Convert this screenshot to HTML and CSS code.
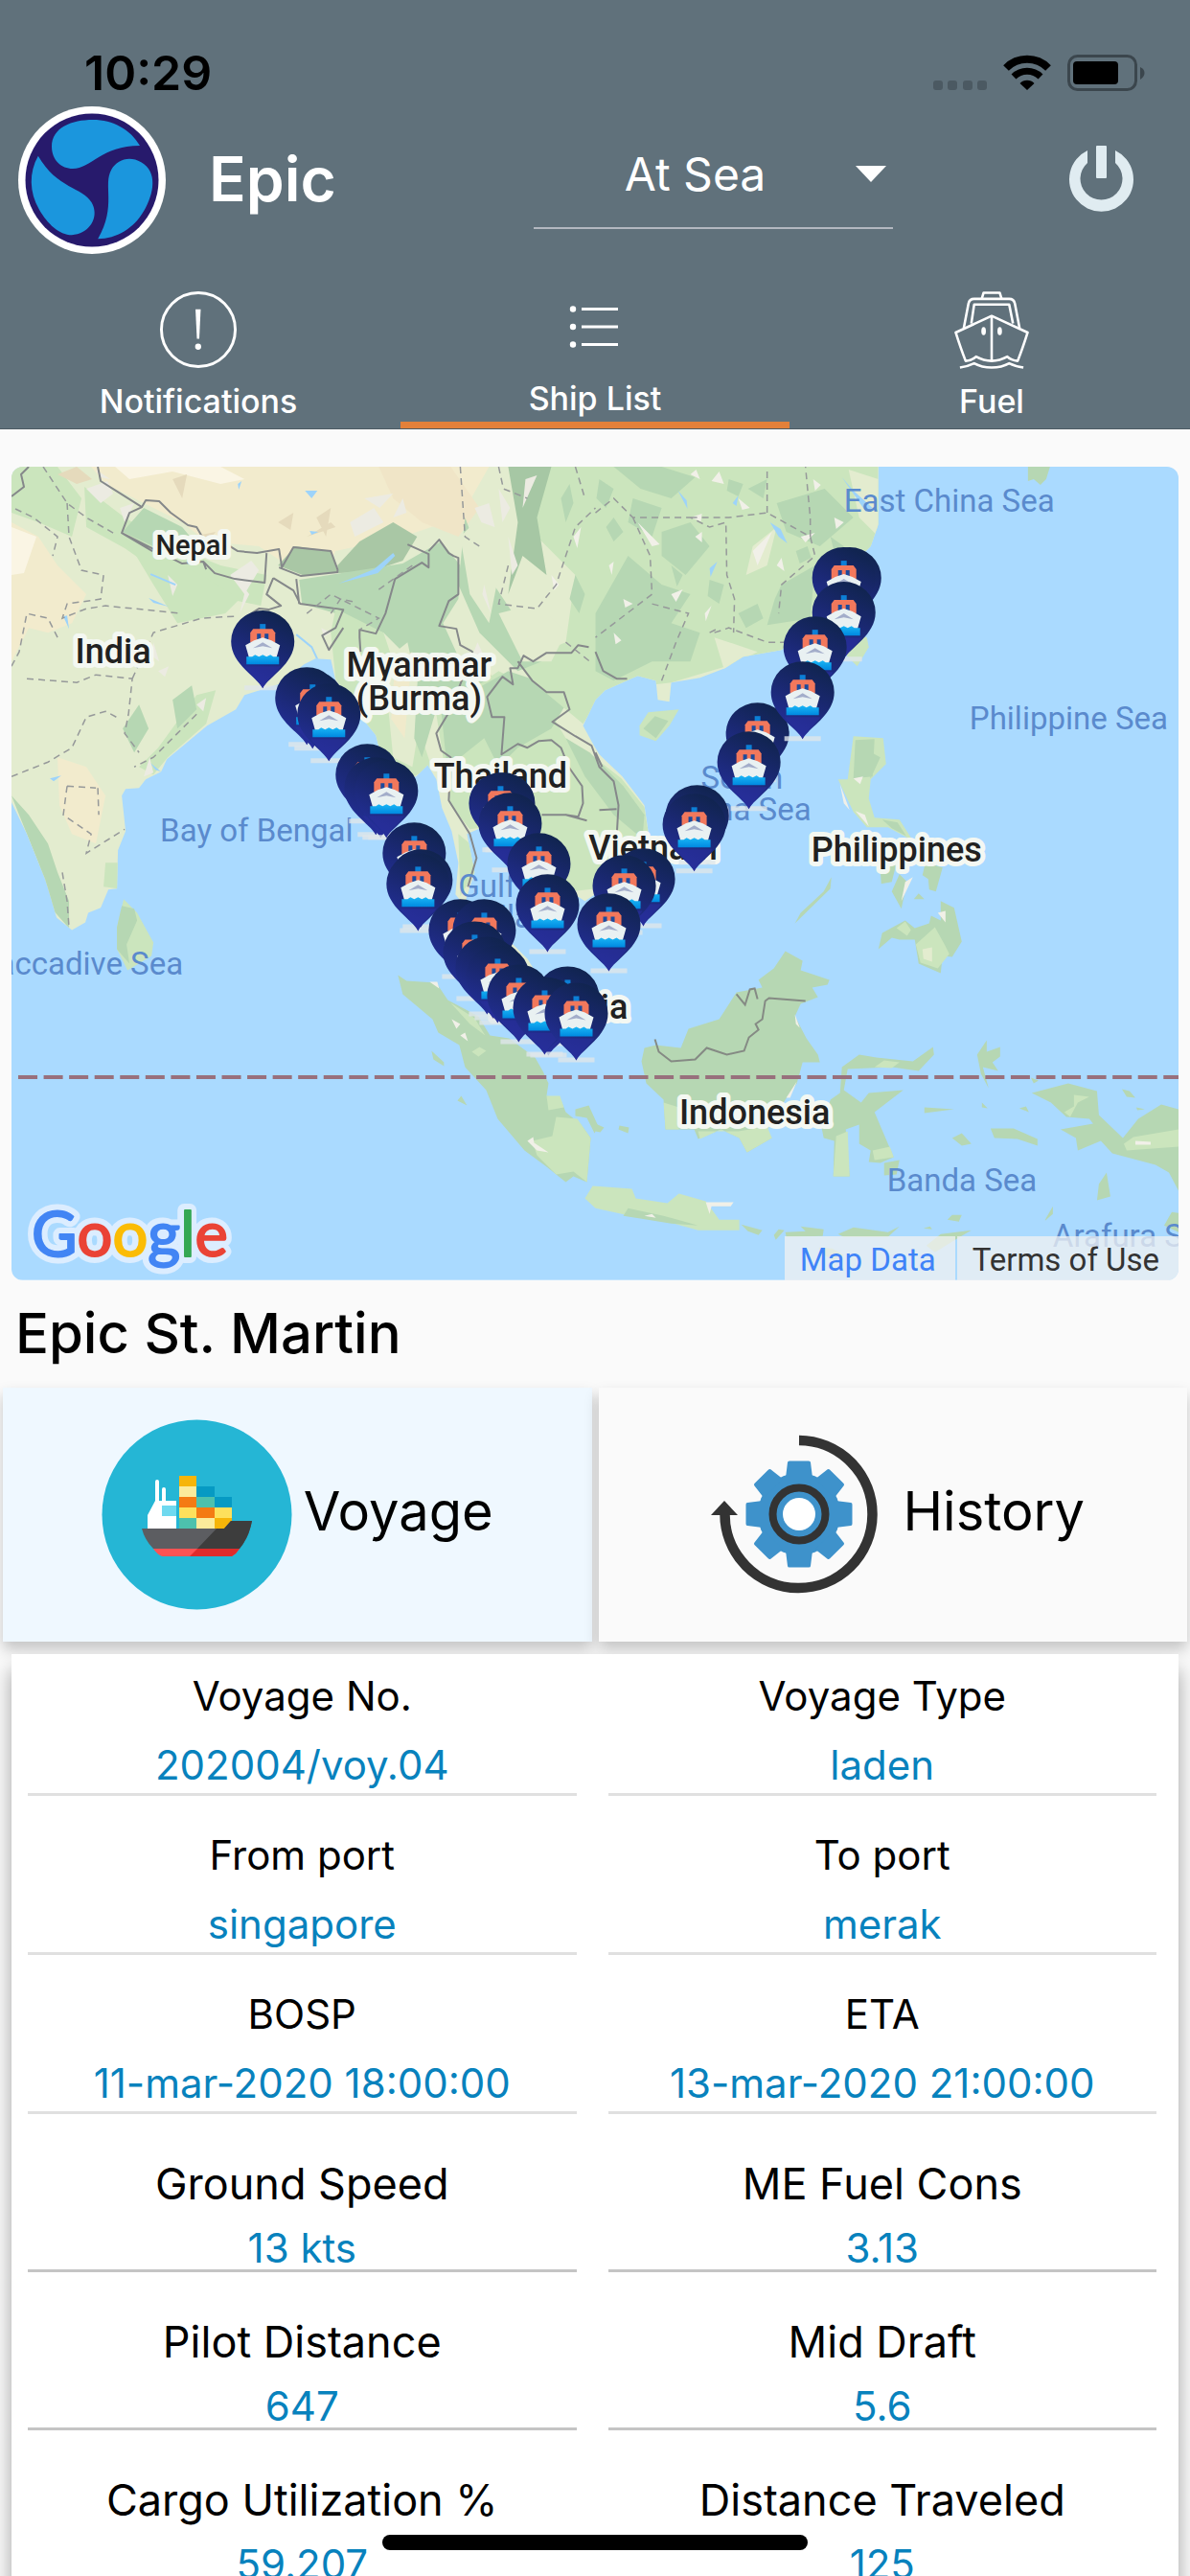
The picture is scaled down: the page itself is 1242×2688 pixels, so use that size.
FILE: index.html
```html
<!DOCTYPE html>
<html lang="en">
<head>
    <meta charset="UTF-8">
    <meta name="viewport" content="width=device-width, initial-scale=1.0">
    <title>Epic - Ship List</title>
    <link rel="stylesheet" href="styles.css">
</head>
<body>
    <header class="header">
        <div class="status-bar">
            <span class="time">10:29</span>
            <svg class="status-icons" viewBox="970 54 226 44" aria-hidden="true">
                <g fill="#4b5962">
                    <rect x="974" y="84" width="10" height="10" rx="3"/>
                    <rect x="989" y="84" width="10" height="10" rx="3"/>
                    <rect x="1005" y="84" width="10" height="10" rx="3"/>
                    <rect x="1020" y="84" width="10" height="10" rx="3"/>
                </g>
                <path d="M1050 71A31 31 0 0 1 1094 71" fill="none" stroke="#000" stroke-width="8"/>
                <path d="M1058 80A20 20 0 0 1 1086 80" fill="none" stroke="#000" stroke-width="7"/>
                <path d="M1064.500 87A10.500 10.500 0 0 1 1079.500 87L1072 94Z"/>
                <rect x="1115.500" y="58.500" width="70" height="35" rx="9" fill="none" stroke="#3b464d" stroke-width="3"/>
                <rect x="1120" y="64" width="47" height="24" rx="4"/>
                <path d="M1190 70Q1194.500 72 1194.500 76T1190 83Z" fill="#3b464d"/>
            </svg>
        </div>

        <div class="top-bar">
            <div class="brand">
                <svg class="logo" viewBox="18 110 156 156" aria-hidden="true">
                    <circle cx="96" cy="188" r="77" fill="#fff"/>
                    <circle cx="96" cy="188" r="69.500" fill="#271a6c"/>
                    <g fill="#1b96dd">
                        <path id="blade" d="M146 152C136 135 118 125 97 125C75 125 54 133 54 153C54 167 64 176 76 176C95 176 106 152 146 152Z"/>
                        <use href="#blade" transform="rotate(120 96 188)"/>
                        <use href="#blade" transform="rotate(240 96 188)"/>
                    </g>
                </svg>
                <h1>Epic</h1>
            </div>
            <div class="picker">
                <select aria-label="Ship status">
                    <option>At Sea</option>
                    <option>In Port</option>
                </select>
            </div>
            <button class="power" aria-label="Log out">
                <svg viewBox="1115 151 70 70" aria-hidden="true">
                    <path d="M1135 157V170A22 22 0 1 0 1164 170V157A33.500 33.500 0 1 1 1135 157Z" fill="#e0ecf1"/>
                    <rect x="1144" y="152" width="11" height="34" rx="1" fill="#e0ecf1"/>
                </svg>
            </button>
        </div>

        <nav class="tabs">
            <button class="tab">
                <svg viewBox="167 302 83 83" aria-hidden="true">
                    <circle cx="208.500" cy="343.500" r="39" fill="none" stroke="#fff" stroke-width="3"/>
                    <path d="M205.500 322H211L209.500 353H207Z" fill="#fff"/>
                    <circle cx="208.300" cy="361.500" r="3.200" fill="#fff"/>
                </svg>
                Notifications
            </button>
            <button class="tab active">
                <svg viewBox="580 299 82 82" aria-hidden="true">
                    <g fill="#fff">
                        <circle cx="598" cy="321.500" r="3.200"/>
                        <circle cx="598" cy="340" r="3.200"/>
                        <circle cx="598" cy="358.500" r="3.200"/>
                        <rect x="607" y="320" width="38" height="3"/>
                        <rect x="607" y="338.500" width="38" height="3"/>
                        <rect x="607" y="357" width="38" height="3"/>
                    </g>
                </svg>
                Ship List
            </button>
            <button class="tab">
                <svg viewBox="991 302 83 83" aria-hidden="true">
                    <g fill="none" stroke="#fff" stroke-width="2.600" stroke-linejoin="round">
                        <path d="M1022 311L1024 304.500H1041L1043 311"/>
                        <path d="M1003 342L1008 316Q1009 311 1014 311H1051Q1056 311 1057 316L1062 342"/>
                        <path d="M1011 337L1014 317H1051L1055 337"/>
                        <path d="M1032.500 329L994.500 346.500Q1000 364 1005 376.500Q1012 376 1016 372Q1024 376.500 1032.500 376.500T1049 372Q1053 376 1060 376.500Q1065 364 1070.500 346.500Z"/>
                        <path d="M1032.500 329V376"/>
                        <path d="M999 383.500Q1008 382 1014 379Q1022 383.500 1032.500 383.500T1051 379Q1057 382 1066 383.500"/>
                    </g>
                    <ellipse cx="1024" cy="345" rx="2.400" ry="4.400" fill="#fff"/>
                    <ellipse cx="1041" cy="345" rx="2.400" ry="4.400" fill="#fff"/>
                </svg>
                Fuel
            </button>
        </nav>
    </header>

    <main>
        <section class="map" aria-label="Ship track map">
            <svg viewBox="12 487 1217 848">
                <defs>
                    <linearGradient id="pinFill" x1="0.700" y1="0" x2="0.300" y2="1">
                        <stop offset="0" stop-color="#10244d"/>
                        <stop offset="0.450" stop-color="#1a2871"/>
                        <stop offset="1" stop-color="#2530a0"/>
                    </linearGradient>
                    <linearGradient id="water" x1="0" y1="0" x2="0" y2="1">
                        <stop offset="0" stop-color="#19b5f5"/>
                        <stop offset="1" stop-color="#0089e0"/>
                    </linearGradient>
                    <g id="pin">
                        <path d="M-19 78H19V83H-19Z" fill="#dfe6ea" opacity="0.800"/>
                        <path d="M0 81C-6 69 -33 56 -33 32A33 32 0 0 1 33 32C33 56 6 69 0 81Z" fill="url(#pinFill)"/>
                        <path d="M0 81C-4 72 -14 65 -19 58H19C14 65 4 72 0 81Z" fill="#2a2f9c" opacity="0.600"/>
                        <path d="M-3 14H3V20H-3Z" fill="#0c7fd6"/>
                        <path d="M-10 19H10L13 23V33H-13V23Z" fill="#f2785c"/>
                        <path d="M-6 24H-2V30H-6ZM2 24H6V30H2Z" fill="#1b4a9c"/>
                        <path d="M-18 36L-9 31L0 28L9 31L18 36L14 50H-14Z" fill="#e9f1f2"/>
                        <path d="M-10 39L0 33L10 39L0 37Z" fill="#a3adca"/>
                        <path d="M-17 48H-11L-8 46L-4 48L0 46L4 48L8 46L11 48H17V56H-17Z" fill="url(#water)"/>
                    </g>
                    <clipPath id="land">
                        <path id="mainland" d="M12 487V837L28 870L47 917L51 930L59 957L75 970L89 962L92 952L105 947L113 928L122 927L123 887L131 867L127 830L131 823L145 822L152 813L168 805L174 792L216 757L246 740L255 725L293 713L317 693L329 687L345 688L350 710L376 747L392 767L396 783L412 800L424 813L434 810L446 798L455 813L461 843L471 867L478 900L475 933L500 965L515 1010L540 1050L570 1080L590 1078L575 1040L550 1000L520 970L500 950L486 938L495 910L487 870L503 863L530 870L545 900L570 915L594 930L610 940L640 920L662 895L676 867L672 840L649 810L625 787L619 777L608 757L621 730L631 720L665 705L684 710L686 730L698 732L700 712L730 707L756 697L775 685L815 678L859 647L898 580L908 570L916 547V487Z"/>
                    </clipPath>
                </defs>

                <rect x="12" y="487" width="1217" height="848" fill="#aadaff"/>

                <!-- mainland -->
                <use href="#mainland" fill="#e3eccf"/>
                <g clip-path="url(#land)">
                    <path d="M95 487H510L480 540L420 560L350 575L342 592L300 590L270 570L215 565L190 545L160 530L140 520L110 505Z" fill="#f2ebcd"/>
                    <path d="M12 545L40 560L60 590L90 620L75 650L50 660L30 655L12 690Z" fill="#f2ebcd"/>
                    <path d="M12 550L38 560L25 598L12 600Z" fill="#faf5e4"/>
                    <path d="M120 487H230L255 500L230 505L180 492L135 500Z" fill="#faf5e4"/>
                    <path d="M60 790L90 800L110 830L100 880L75 870L62 840Z" fill="#f2ebcd"/>
                    <path d="M395 487H470L500 530L478 560L440 545L410 520Z" fill="#f0e5c7"/>
                    <path d="M12 487H60L85 520L75 560L40 545L12 535Z" fill="#cbe5bd"/>
                    <path d="M88 508L130 540L180 570L230 590L278 600L272 632L215 620L170 600L130 572L90 550Z" fill="#cbe5bd"/>
                    <path d="M130 560L210 600L250 625L235 640L185 650L160 610Z" fill="#cbe5bd"/>
                    <path d="M128 555L150 530L190 550L215 580L190 575L160 570Z" fill="#b6d7b3"/>
                    <path d="M290 590L308 570L345 575L352 597L318 601Z" fill="#a9c7a5"/>
                    <path d="M352 590L375 565L410 545L435 560L420 585L385 597L352 598Z" fill="#a9c7a5"/>
                    <path d="M312 605L420 588L460 565L480 590L478 625L462 650L478 685L510 700L540 760L470 760L430 690L400 660L350 640L315 630Z" fill="#b6d7b3"/>
                    <path d="M350 635L400 660L420 720L440 770L450 800L428 812L396 780L350 708L345 660Z" fill="#cbe5bd"/>
                    <path d="M400 690L425 670L440 740L430 800L410 790Z" fill="#e3eccf"/>
                    <path d="M436 700L448 695L455 740L440 790L432 770Z" fill="#b6d7b3"/>
                    <path d="M412 690L430 680L422 770L408 750Z" fill="#f0eacb"/>
                    <path d="M455 745L520 700L560 720L590 770L620 790L648 812L672 842L676 867L640 925L595 930L560 905L530 860L490 865L470 840Z" fill="#cbe5bd"/>
                    <path d="M460 740L530 700L560 710L590 735L575 760L540 780L520 800L505 770L480 790L468 820Z" fill="#b6d7b3"/>
                    <path d="M590 770L615 785L650 820L672 850L670 875L640 850L610 810Z" fill="#b6d7b3"/>
                    <path d="M540 487H916V570L859 647L815 678L700 712L631 720L608 755L560 715L540 690L590 670L600 600L560 560Z" fill="#cbe5bd"/>
                    <path d="M530 487H575L560 540L570 600L545 580L530 620L540 545Z" fill="#a6c7a4"/>
                    <path d="M485 540L500 580L515 610L535 640L565 690L540 700L500 660L478 610Z" fill="#b6d7b3"/>
                    <path d="M520 640L560 630L590 660L575 690L545 690Z" fill="#e3eccf"/>
                    <path d="M480 560L500 540L520 600L510 650L490 620Z" fill="#e3eccf"/>
                    <path d="M640 487H690L725 498L700 520L668 510Z" fill="#b6d7b3"/>
                    <path d="M690 555L720 545L740 570L715 600L690 580Z" fill="#b6d7b3"/>
                    <path d="M810 525L860 510L890 540L855 570L820 555Z" fill="#b6d7b3"/>
                    <path d="M815 610L850 590L845 645L800 652L808 625Z" fill="#b6d7b3"/>
                    <path d="M655 580L690 610L720 620L700 650L730 660L720 690L680 690L640 710L621 700V640Z" fill="#b6d7b3"/>
                    <path d="M660 520L690 530L680 560L655 545Z" fill="#b6d7b3"/>
                    <path d="M745 665L790 680L755 698Z" fill="#e3eccf"/>
                    <path d="M785 570L810 550L800 590L778 600Z" fill="#e3eccf"/>
                    <path d="M885 490L916 500V560L896 540Z" fill="#e3eccf"/>
                    <path d="M12 830L30 850L50 880L60 910L72 940L72 968L56 950L40 900Z" fill="#b6d7b3"/>
                    <path d="M128 760L145 735L155 760L140 785Z" fill="#b6d7b3"/>
                    <path d="M145 800L165 780L205 725L225 720L215 755L175 790L160 808Z" fill="#cbe5bd"/>
                    <path d="M180 730L200 715L205 740L185 760Z" fill="#b6d7b3"/>
                    <path d="M110 900H123V927L108 925Z" fill="#cbe5bd"/>
                    <path d="M478 870L490 880L495 910L480 935Z" fill="#cbe5bd"/>

                    <!-- light flecks on the hills -->
                    <path d="M90 510L112 502L118 515L105 525ZM125 530L140 525L130 545ZM100 490L115 500L104 498ZM240 600L262 585L270 595L255 620ZM365 545L390 530L400 545L370 560ZM380 520L410 515L396 530ZM495 530L510 525L516 550L502 545ZM520 510L532 530L524 545ZM548 500L560 496L545 530ZM505 610L512 640L503 620ZM530 560L540 590L534 600ZM498 670L505 685L490 690ZM175 600L185 610L180 622ZM260 620L250 640L256 615ZM165 700L176 695L172 706ZM150 810L156 790L160 806ZM205 735L215 728L212 742ZM160 670L166 690L158 684ZM335 655L345 660L338 664ZM410 540L420 520L424 535Z" fill="#ecebe2"/>
                    <path d="M742 502L750 492L755 505ZM665 545L688 568L680 570ZM725 560L732 555V566ZM785 575L805 555L790 590ZM720 495L726 490L730 500ZM770 520L782 530L774 532ZM810 590L815 582L818 596ZM735 640L742 632L736 648ZM640 660L648 668L642 672ZM700 620L712 615L705 628ZM848 500L856 506L850 512ZM870 540L880 545L872 552ZM635 590L640 586L638 600ZM650 625L660 630L652 634ZM720 540L732 536L731 544ZM835 560L850 556L840 566ZM598 560L606 550L602 572ZM575 600L583 610L578 616Z" fill="#f1f0e8"/>
                    <path d="M625 500L640 510L632 530L622 520ZM700 590L712 600L706 612ZM760 500L775 505L770 518L758 512ZM740 605L755 610L750 630L738 622ZM770 640L790 630L796 645L778 655ZM830 575L842 570L846 582L834 588ZM866 560L880 570L872 584ZM780 510L800 500L796 520ZM640 540L650 555L640 565L632 550ZM600 600L610 620L604 640L594 625ZM585 520L594 505L598 525L590 545Z" fill="#b6d7b3"/>
                    <path d="M290 545L306 535L303 553ZM330 540L345 530L340 560ZM320 560L345 545L350 550ZM180 500L195 495L190 520ZM60 495L80 487L96 500L80 505ZM200 560L225 555L212 570Z" fill="#e5dabc"/>

                    <!-- lakes and rivers -->
                    <path d="M248 505L252 502L249 511ZM318 512L331 512L325 520ZM323 554L332 555L325 558ZM155 624L176 633L160 629ZM353 609L390 594L410 577L412 580L394 598ZM160 600L185 608ZM66 643L72 656L70 642ZM52 812L64 809L56 815ZM707 512L716 522L717 531ZM803 545L814 552L821 567L812 560ZM740 593L748 586L741 602ZM764 525L770 517L768 528ZM157 796L168 805L162 803ZM878 498L890 512L910 530L903 534Z" fill="#9dd3fa"/>
                    <path d="M309 662L325 675L333 692M157 599L183 610" fill="none" stroke="#9dd3fa" stroke-width="2"/>
                </g>

                <!-- country borders -->
                <g fill="none" stroke="#85888a" stroke-width="2" stroke-linejoin="round">
                    <path d="M12 518L25 508L22 495L30 487M102 487L105 502L148 529L152 522L166 523L178 535L196 548L205 550L212 562L240 570L248 575L268 577L291 573L294 592L306 571L345 575L352 594V597L314 601L291 592M148 529L135 535L127 556L159 575M212 586L224 598L245 604L276 608L278 577M127 556L190 588L212 586L215 594"/>
                    <path d="M285 603L306 616L313 630L358 636L350 655L336 663L343 678L358 655M285 603L278 620L293 632L280 636L270 635L262 640M309 604L312 630M375 665V657L392 661L402 640L412 604L440 587L447 592V578L425 568M447 575L458 563L468 577L473 580L478 582V620L468 627L458 653L476 656L480 673L493 680M375 665L376 680"/>
                    <path d="M614 675L603 673L596 681H570L556 690L546 684L540 697H532L535 714L524 706L508 727L513 748L526 748L523 787L540 776L550 780L562 773L575 772L585 780L593 800L607 820L608 838L603 852L590 850H565M493 680L470 740L455 765L460 783L470 790L468 835L490 870L497 895L488 925M540 690L555 710L570 722H588L594 740L576 753L600 768L617 778L625 800L640 815L645 840L643 875M625 845L643 844M590 850L612 856M621 680L629 700L643 708H654M621 785L628 800"/>
                </g>

                <!-- state borders -->
                <g fill="none" stroke="#96999a" stroke-width="1.500" stroke-dasharray="7 5">
                    <path d="M45 487L70 525L90 540L118 556M70 525L72 560L85 595L108 600L105 625L70 630L65 645L90 635L110 632L190 640M16 531L35 540L60 560L55 580M12 695L20 680L28 640L50 645L60 665M28 708L80 712L100 704L138 708L134 745L130 765L145 785M138 708L160 660L210 645L245 643M12 810L50 795L75 780L90 748L110 742L125 750M70 820L66 850L95 870L90 890L130 865M70 820L100 822M102 822L103 850M205 745L160 790L140 800"/>
                    <path d="M320 640L345 620L395 645L375 657M395 615L430 590M345 640L355 625L370 628M480 487L485 560L500 570M530 590L520 630L560 635L580 610L590 580L600 550L621 530M621 535L640 520L660 540L720 540L740 550L757 545L758 600L766 625L765 660M660 540L678 580L680 620L621 665M720 540L760 540L800 535L845 560L850 580L815 610L812 640M800 535V487M745 660L760 655L800 670L820 670M845 560V540L840 487M680 630L718 640L705 670L690 710M590 670L615 690M740 660L750 655"/>
                    <path d="M65 910L70 940L72 968M520 487L525 510L550 520M600 487L610 520"/>
                </g>

                <!-- islands -->
                <g fill="#b6d7b3">
                    <path d="M129 938L143 952L160 983L158 997L133 1012L122 990V967Z" fill="#cbe5bd"/>
                    <path d="M127 945L140 948L143 960L132 985L135 1005L122 990V967Z"/>
                    <path d="M415 1017L424 1023L455 1025L467 1043L499 1060L511 1080L531 1083L558 1103L566 1117L572 1130L570 1143L584 1145L590 1160L606 1173L616 1187L612 1233L598 1227L590 1233L570 1217L547 1200L519 1167L507 1137L485 1113L479 1090L457 1077L451 1063L420 1037Z"/>
                    <path d="M580 1165L602 1167L616 1187L612 1233L598 1222L580 1225L560 1205L555 1190L576 1185Z" fill="#cbe5bd"/>
                    <path d="M570 1143H584L588 1155L572 1158ZM470 1046L495 1062L506 1080L490 1068ZM492 1097L500 1092L507 1096L499 1102Z" fill="#cbe5bd"/>
                    <path d="M450 1096L463 1108V1112L452 1105ZM481 1143L487 1153L477 1148ZM600 1157L614 1153L624 1175L620 1182L612 1166L600 1164Z"/>
                    <path d="M667 757L676 743L708 740L698 757L684 773L667 767Z" fill="#cbe5bd"/>
                    <path d="M671 760L683 747L697 752L684 770Z"/>
                    <path d="M1072 487H1095L1091 500L1085 506L1078 500L1072 502Z"/>
                    <path d="M904 665L906 675L894 695L882 683L890 660Z" fill="#cbe5bd"/>
                    <path d="M890 768L921 770L924 797L908 813L906 833L912 853L938 855L952 877L926 863L904 863L890 847L874 813L884 813Z" fill="#cbe5bd"/>
                    <path d="M892 772L912 771L910 810L890 812ZM920 855L936 858L945 872L930 864ZM900 780L918 790L908 812Z"/>
                    <path d="M918 908L935 900L930 920L919 922ZM930 930L938 912L946 920L940 948ZM965 900L983 905L976 930L969 928L968 917L962 913ZM953 938L958 932L964 938ZM867 915L866 927L829 963L835 952L859 930ZM978 905L985 908Z"/>
                    <path d="M916 990L920 973L944 960L954 968L969 963L971 955L981 960V940L995 947L1003 982L993 998L983 997L981 1015L958 1005L954 980L938 980L930 978Z"/>
                    <path d="M955 985L975 967L985 985L990 995L978 1010L960 1004ZM935 968L944 961L950 970L946 976Z" fill="#cbe5bd"/>
                    <path d="M962 990L972 988V1003L963 1000Z" fill="#e3eccf"/>
                    <path d="M819 992L837 1002L835 1012L865 1022L863 1027L847 1030L853 1040L835 1047L829 1060L841 1083L853 1100L855 1108L837 1108L831 1130L819 1147L799 1180L805 1187L779 1202L771 1187L752 1178L728 1188L724 1178H694L692 1147L674 1130L669 1107L672 1093L684 1090L710 1093L718 1073L750 1063L768 1035L795 1030L791 1022L807 1010Z"/>
                    <path d="M692 1150L708 1155V1178H694ZM728 1180H770L800 1175L805 1187L779 1202L771 1187L752 1178L730 1188Z" fill="#cbe5bd"/>
                    <path d="M878 1113L896 1100L914 1103L952 1107L973 1092L974 1100L958 1117L930 1113L884 1115L880 1137L898 1150L906 1140L942 1137L912 1160L932 1207L918 1213L906 1212L908 1200L896 1193V1173L882 1178L886 1227H869L870 1190L859 1187L857 1177L866 1147L876 1140Z"/>
                    <path d="M872 1185L884 1180L886 1227H869ZM910 1200L928 1196L932 1207L912 1210ZM912 1113L922 1106L938 1108L930 1114Z" fill="#cbe5bd"/>
                    <path d="M922 1213L938 1210L935 1225L922 1226ZM1029 1085V1097L1043 1092V1102L1035 1108L1041 1117L1025 1113L1031 1135L1023 1120L1019 1100ZM1033 1177L1057 1177L1082 1188V1195L1061 1188L1037 1187ZM993 1187L1003 1182L1013 1193L1003 1195ZM964 1155L995 1157L964 1161ZM1063 1156L1070 1154L1073 1160ZM1024 1150L1030 1156L1024 1155ZM1170 1136L1178 1138L1184 1145L1175 1144ZM1075 1124L1083 1127L1078 1130ZM1185 1155L1194 1157L1186 1158Z"/>
                    <path d="M1076 1140L1114 1130L1144 1138L1146 1163L1171 1187L1187 1167L1211 1152L1229 1157V1242L1219 1223L1205 1215L1160 1203L1148 1190L1124 1200L1122 1187L1106 1178L1140 1172L1136 1167L1112 1165L1096 1150Z"/>
                    <path d="M1182 1186L1229 1178V1196L1175 1200L1172 1193Z" fill="#cbe5bd"/>
                    <path d="M1120 1142L1136 1144L1124 1150L1116 1165L1110 1160L1120 1154Z" fill="#cbe5bd"/>
                    <path d="M1154 1223L1158 1248L1144 1252L1146 1235ZM1090 1272L1098 1258V1266L1090 1273ZM988 1272L993 1267L1003 1267L1000 1274ZM1229 1265L1222 1264L1214 1278L1229 1285Z"/>
                    <path d="M610 1250L618 1237L659 1240L663 1250L696 1255L708 1245L736 1253L750 1272H771V1283H728L692 1273L653 1267L621 1260Z" fill="#cbe5bd"/>
                    <path d="M655 1260L692 1268L728 1278L700 1276L650 1268ZM773 1277L795 1283L791 1288L780 1284ZM807 1288L812 1282L818 1283L809 1293ZM819 1285L840 1284L835 1279L859 1282L858 1289L820 1290ZM874 1287L890 1280L926 1285L938 1279L926 1290L880 1290ZM966 1299L981 1287L1013 1283L1001 1290L975 1306ZM963 1281L970 1279L972 1282ZM854 1301L868 1302L880 1309L868 1314L855 1306ZM621 1172L630 1176L626 1181L621 1180ZM646 1174L656 1176L655 1182L645 1178Z"/>
                    <path d="M448 1024L456 1024L458 1031ZM471 1063L480 1068L476 1073ZM480 1080L485 1077L488 1086ZM550 1190L556 1186L557 1192L572 1202L560 1200ZM736 1254L765 1254L762 1258H742L740 1266ZM672 1268L680 1266L684 1270ZM1184 1190L1200 1191V1194L1184 1194ZM829 1058L834 1072L830 1068ZM831 1128L824 1145L820 1145ZM890 812L900 810L897 818ZM876 818L886 845L880 838ZM892 846L902 850L906 862ZM952 915L940 940L944 920ZM978 952L986 950L986 962Z" fill="#f1f0e8"/>
                </g>
                <g fill="none" stroke="#858a84" stroke-width="2">
                    <path d="M683 1084L687 1097L700 1107L725 1105L737 1093L758 1100L776 1096L781 1082L791 1074L788 1068L795 1063L798 1044L802 1041L840 1044"/>
                    <path d="M768 1037L777 1048L782 1032L787 1031L790 1042"/>
                </g>

                <path d="M19 1123.500H1229" stroke="#98707c" stroke-width="4" stroke-dasharray="20 6.540"/>

                <g class="sea">
                    <text x="880" y="534">East China Sea</text>
                    <text x="1011" y="761">Philippine Sea</text>
                    <text x="731" y="823">South</text>
                    <text x="846" y="856" text-anchor="end">China Sea</text>
                    <text x="167" y="878">Bay of Bengal</text>
                    <text x="191" y="1017" text-anchor="end">Laccadive Sea</text>
                    <text x="478" y="936">Gulf of</text>
                    <text x="528" y="968" text-anchor="middle">Thailand</text>
                    <text x="925" y="1242">Banda Sea</text>
                    <text x="1098" y="1300">Arafura Sea</text>
                </g>
                <g class="country">
                    <text class="small" x="200" y="579">Nepal</text>
                    <text x="118" y="692">India</text>
                    <text x="437" y="706">Myanmar</text>
                    <text x="437" y="741">(Burma)</text>
                    <text x="522" y="822">Thailand</text>
                    <text x="681" y="897">Vietnam</text>
                    <text x="935" y="899">Philippines</text>
                    <text x="787" y="1172">Indonesia</text>
                    <text x="583" y="1063">Malaysia</text>
                </g>

                <!-- ship track -->
                <g>
                    <use href="#pin" x="274" y="637"/>
                    <use href="#pin" x="320" y="696"/>
                    <use href="#pin" x="326" y="700"/>
                    <use href="#pin" x="343" y="713"/>
                    <use href="#pin" x="383" y="776"/>
                    <use href="#pin" x="392" y="790"/>
                    <use href="#pin" x="397" y="793"/>
                    <use href="#pin" x="403" y="793"/>
                    <use href="#pin" x="432" y="858"/>
                    <use href="#pin" x="439" y="886"/>
                    <use href="#pin" x="436" y="890"/>
                    <use href="#pin" x="525" y="806"/>
                    <use href="#pin" x="522" y="806"/>
                    <use href="#pin" x="532" y="827"/>
                    <use href="#pin" x="562" y="869"/>
                    <use href="#pin" x="571" y="912"/>
                    <use href="#pin" x="480" y="938"/>
                    <use href="#pin" x="505" y="938"/>
                    <use href="#pin" x="495" y="961"/>
                    <use href="#pin" x="508" y="977"/>
                    <use href="#pin" x="514" y="981"/>
                    <use href="#pin" x="519" y="986"/>
                    <use href="#pin" x="541" y="1006"/>
                    <use href="#pin" x="592" y="1008"/>
                    <use href="#pin" x="572" y="1020"/>
                    <use href="#pin" x="568" y="1019"/>
                    <use href="#pin" x="601" y="1025"/>
                    <use href="#pin" x="886" y="571"/>
                    <use href="#pin" x="880" y="571"/>
                    <use href="#pin" x="880" y="607"/>
                    <use href="#pin" x="850" y="643"/>
                    <use href="#pin" x="790" y="733"/>
                    <use href="#pin" x="837" y="690"/>
                    <use href="#pin" x="781" y="763"/>
                    <use href="#pin" x="727" y="819"/>
                    <use href="#pin" x="724" y="828"/>
                    <use href="#pin" x="671" y="885"/>
                    <use href="#pin" x="651" y="892"/>
                    <use href="#pin" x="635" y="932"/>
                </g>

                <g class="google">
                    <text class="halo" x="33" y="1310" aria-hidden="true">Google</text>
                    <text x="33" y="1310"><tspan fill="#4285f4" stroke="#4285f4">G</tspan><tspan fill="#ea4335" stroke="#ea4335">o</tspan><tspan fill="#fbbc05" stroke="#fbbc05">o</tspan><tspan fill="#4285f4" stroke="#4285f4">g</tspan><tspan fill="#34a853" stroke="#34a853">l</tspan><tspan fill="#ea4335" stroke="#ea4335">e</tspan></text>
                </g>
            </svg>
            <div class="map-links">
                <a class="map-data" href="#">Map Data</a>
                <a href="#">Terms of Use</a>
            </div>
        </section>

        <h2 class="ship-name">Epic St. Martin</h2>

        <div class="tiles">
            <button class="tile selected">
                <svg viewBox="106 1482 199 199" aria-hidden="true">
                    <circle cx="205.500" cy="1581.500" r="99" fill="#25b6d5"/>
                    <path d="M162 1547Q162 1545 164 1545T166 1547V1567H169V1555Q169 1553 171 1553T173 1555V1567H184V1596H154V1582L162 1567Z" fill="#fff"/>
                    <rect x="169" y="1572" width="15" height="11" fill="#6fd9ef"/>
                    <path d="M187 1541H205V1552H187ZM224 1585H242V1596H224Z" fill="#f6b509"/>
                    <path d="M187 1552H205V1563H187ZM205 1585H224V1596H205Z" fill="#fbeb9b"/>
                    <path d="M187 1563H205V1574H187ZM205 1574H224V1585H205Z" fill="#f47b13"/>
                    <path d="M187 1574H205V1585H187ZM224 1574H242V1585H224Z" fill="#fde05c"/>
                    <path d="M187 1585H205V1596H187ZM205 1563H224V1574H205Z" fill="#4dc1ad"/>
                    <path d="M205 1552H224V1563H205ZM224 1563H242V1574H224Z" fill="#069ac3"/>
                    <path d="M148 1596H234L241 1588H263Q260 1605 250 1617H160Q151 1608 148 1596Z" fill="#5c5d61"/>
                    <path d="M226 1596H234L241 1588H263Q260 1605 250 1617H206Z" fill="#3d3d3d"/>
                    <path d="M160 1617H250Q247 1622 242 1625H169Q163 1622 160 1617Z" fill="#fd5354"/>
                    <path d="M206 1617H250Q247 1622 242 1625H198Z" fill="#df2b2b"/>
                </svg>
                <span>Voyage</span>
            </button>
            <button class="tile">
                <svg viewBox="731 1482 199 199" aria-hidden="true">
                    <path d="M834 1504A77 77 0 1 1 756.500 1580" fill="none" stroke="#333" stroke-width="10.500"/>
                    <path d="M756 1567L770 1582H742Z" fill="#333"/>
                    <g fill="#3e92cb">
                        <circle cx="834" cy="1581" r="43"/>
                        <path id="tooth" d="M820 1543L822 1527Q822 1525.500 824 1525.500H844Q846 1525.500 846 1527L848 1543Z"/>
                        <use href="#tooth" transform="rotate(45 834 1581)"/>
                        <use href="#tooth" transform="rotate(90 834 1581)"/>
                        <use href="#tooth" transform="rotate(135 834 1581)"/>
                        <use href="#tooth" transform="rotate(180 834 1581)"/>
                        <use href="#tooth" transform="rotate(225 834 1581)"/>
                        <use href="#tooth" transform="rotate(270 834 1581)"/>
                        <use href="#tooth" transform="rotate(315 834 1581)"/>
                    </g>
                    <circle cx="834" cy="1581" r="27.500" fill="none" stroke="#333" stroke-width="8"/>
                    <circle cx="834" cy="1581" r="17" fill="#fff"/>
                </svg>
                <span>History</span>
            </button>
        </div>

        <dl class="details">
            <div class="field"><dt>Voyage No.</dt><dd>202004/voy.04</dd></div>
            <div class="field"><dt>Voyage Type</dt><dd>laden</dd></div>
            <div class="field"><dt>From port</dt><dd>singapore</dd></div>
            <div class="field"><dt>To port</dt><dd>merak</dd></div>
            <div class="field"><dt>BOSP</dt><dd>11-mar-2020 18:00:00</dd></div>
            <div class="field"><dt>ETA</dt><dd>13-mar-2020 21:00:00</dd></div>
            <div class="field stat"><dt>Ground Speed</dt><dd>13 kts</dd></div>
            <div class="field stat"><dt>ME Fuel Cons</dt><dd>3.13</dd></div>
            <div class="field stat"><dt>Pilot Distance</dt><dd>647</dd></div>
            <div class="field stat"><dt>Mid Draft</dt><dd>5.6</dd></div>
            <div class="field stat"><dt>Cargo Utilization %</dt><dd>59.207</dd></div>
            <div class="field stat"><dt>Distance Traveled</dt><dd>125</dd></div>
        </dl>
    </main>

    <div class="home-indicator"></div>
</body>
</html>
```
FILE: styles.css
```css
* {
    box-sizing: border-box;
}

body {
    margin: 0;
    height: 100vh;
    display: flex;
    flex-direction: column;
    overflow: hidden;
    background: #fafafa;
    color: #000;
    font-family: Inter, "Liberation Sans", sans-serif;
}

button {
    border: none;
    padding: 0;
    background: none;
    color: inherit;
    font-family: inherit;
    cursor: pointer;
}

svg {
    display: block;
}

/* Header */
.header {
    flex: none;
    background: #60717b;
    color: #fff;
    border-bottom: 1px solid #4c5b63;
}

.status-bar {
    display: flex;
    justify-content: space-between;
    align-items: center;
    height: 110px;
    padding: 42px 46px 0 88px;
    color: #000;
}

.time {
    font-size: 50px;
    font-weight: 600;
}

.status-icons {
    width: 226px;
    height: 44px;
}

.top-bar {
    display: grid;
    grid-template-columns: 557fr 375fr 310fr;
    align-items: center;
}

.brand {
    display: flex;
    align-items: center;
    gap: 44px;
    padding-left: 18px;
}

.logo {
    width: 156px;
    height: 156px;
}

.brand h1 {
    margin: 0;
    padding-bottom: 4px;
    font-size: 64px;
    font-weight: 600;
}

.picker {
    position: relative;
}

.picker select {
    width: 100%;
    height: 102px;
    padding: 0 38px 12px 0;
    appearance: none;
    border: none;
    border-bottom: 2px solid #b3b8c0;
    border-radius: 0;
    background: transparent;
    color: #fff;
    font-family: inherit;
    font-size: 48px;
    text-align: center;
    text-align-last: center;
}

.picker::after {
    content: "";
    position: absolute;
    right: 7px;
    top: 36px;
    border: 16px solid transparent;
    border-top: 17px solid #fff;
    border-bottom: 0;
    pointer-events: none;
}

.power {
    justify-self: end;
    margin-right: 57px;
    padding-bottom: 4px;
}

.power svg {
    width: 70px;
    height: 70px;
}

.tabs {
    display: flex;
    height: 181px;
}

.tab {
    flex: 1;
    display: flex;
    flex-direction: column;
    align-items: center;
    justify-content: center;
    gap: 14px;
    margin: 0 4px;
    padding-top: 29px;
    font-size: 34px;
    font-weight: 500;
    line-height: 40px;
}

.tab svg {
    width: 82px;
    height: 82px;
}

.tab.active {
    border-bottom: 7px solid #e3803a;
}

/* Map */
.map {
    position: relative;
    margin: 39px 12px 0;
    border-radius: 12px;
    overflow: hidden;
}

.map > svg {
    width: 100%;
}

.map text {
    font-family: Roboto, sans-serif;
}

.sea {
    fill: #5a8acd;
    font-size: 33px;
}

.country {
    fill: #212121;
    font-size: 36px;
    font-weight: 500;
    text-anchor: middle;
    stroke: #f4f8f2;
    stroke-width: 10px;
    stroke-linejoin: round;
    paint-order: stroke;
}

.country .small {
    font-size: 29px;
}

.map .google text {
    font-family: Lato, sans-serif;
    font-size: 65px;
    stroke-width: 2px;
    stroke-linejoin: round;
}

.map .google .halo {
    fill: #dcedff;
    stroke: #dcedff;
    stroke-width: 14px;
}

.map-links {
    position: absolute;
    right: 0;
    bottom: 0;
    display: flex;
    gap: 2px;
    font: 33px/42px Roboto, sans-serif;
}

.map-links a {
    padding: 4px 20px 0 16px;
    background: rgba(241, 241, 241, 0.75);
    color: #333;
    text-decoration: none;
}

.map-links .map-data {
    color: #3f83f8;
}

.ship-name {
    margin: 0;
    padding: 0 0 2px 16px;
    font-size: 58px;
    font-weight: 500;
    line-height: 110px;
}

/* Voyage / History */
.tiles {
    display: flex;
    gap: 7px;
    padding: 0 3px;
}

.tile {
    flex: 1;
    display: flex;
    align-items: center;
    justify-content: center;
    gap: 12px;
    height: 265px;
    background: #fafafa;
    box-shadow: 0 8px 14px rgba(0, 0, 0, 0.22);
    font-size: 56px;
}

.tile.selected {
    background: #eff8ff;
}

.tile span {
    padding-bottom: 6px;
}

.tile svg {
    width: 199px;
    height: 199px;
}

/* Voyage details */
.details {
    position: relative;
    display: grid;
    grid-template-columns: 1fr 1fr;
    column-gap: 33px;
    margin: 13px 12px 0;
    padding: 0 23px 0 17px;
    background: #fff;
    box-shadow: 0 16px 20px rgba(0, 0, 0, 0.35);
}

.field {
    display: flex;
    flex-direction: column;
    gap: 20px;
    padding: 36px 0 3px;
    border-bottom: 3px solid #e0e0e0;
    font-size: 42px;
    line-height: 52px;
    text-align: center;
}

.field:nth-child(-n+2) {
    padding-top: 18px;
}

.field dd {
    margin: 0;
    color: #0882bd;
}

.stat {
    gap: 19px;
    padding: 47px 0 0;
    border-bottom-color: #c4c4c4;
}

.stat dt {
    font-size: 45px;
}

.stat dd {
    line-height: 44px;
}

.home-indicator {
    position: fixed;
    bottom: 27px;
    left: 50%;
    width: 444px;
    height: 16px;
    margin-left: -222px;
    border-radius: 8px;
    background: #000;
}
```
